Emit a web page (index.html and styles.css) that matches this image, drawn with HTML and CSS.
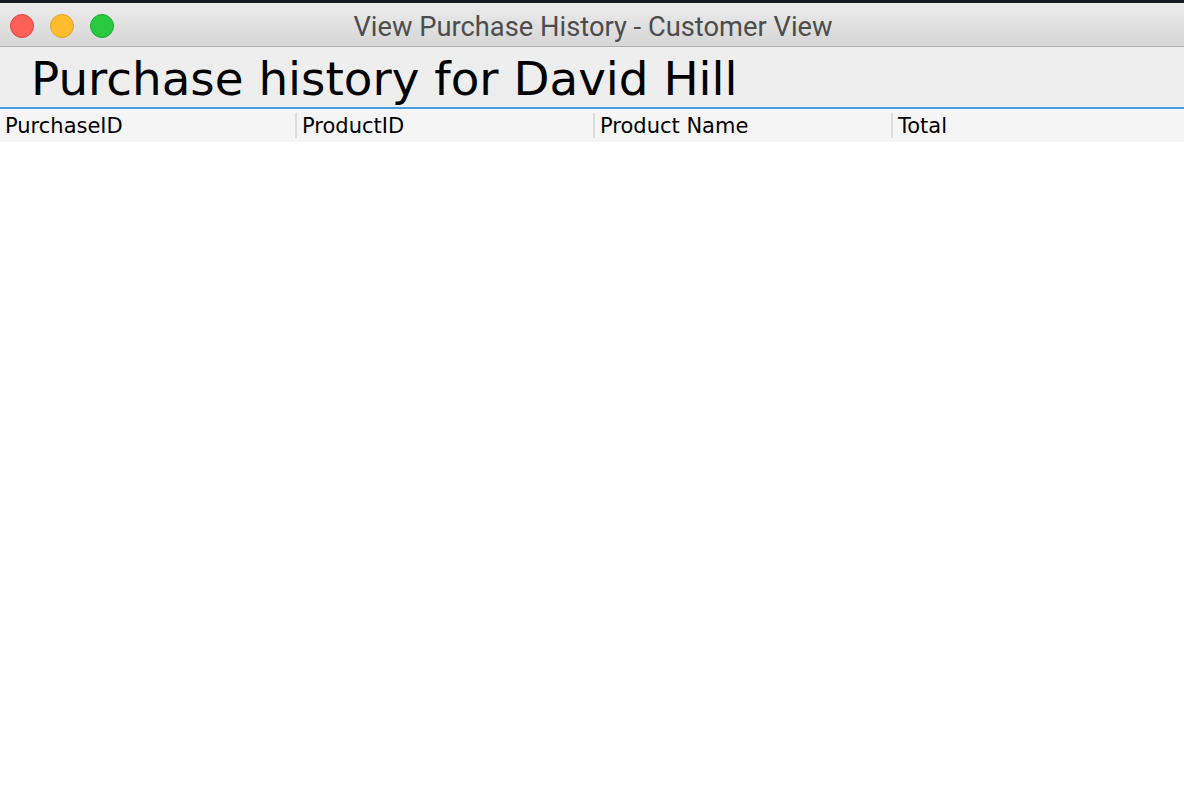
FILE: index.html
```html
<!DOCTYPE html>
<html>
<head>
<meta charset="utf-8">
<link rel="stylesheet" href="styles.css">
</head>
<body>
<div class="window">
  <div class="topstrip"></div>
  <div class="titlebar">
    <div class="lights">
      <span class="light red"></span>
      <span class="light yellow"></span>
      <span class="light green"></span>
    </div>
    <div class="title">View Purchase History - Customer View</div>
  </div>
  <div class="heading"><h1>Purchase history for David Hill</h1></div>
  <div class="table">
    <div class="thead">
      <div class="th first">PurchaseID</div>
      <div class="th">ProductID</div>
      <div class="th">Product Name</div>
      <div class="th">Total</div>
    </div>
    <div class="tbody"></div>
  </div>
</div>
</body>
</html>
```
FILE: styles.css
```css
html, body {
  margin: 0;
  padding: 0;
  background: #ffffff;
}
.window {
  width: 1184px;
  height: 798px;
  display: flex;
  flex-direction: column;
  overflow: hidden;
}
.topstrip {
  height: 3px;
  background: #161a22;
}
.titlebar {
  position: relative;
  height: 43px;
  background: linear-gradient(#ececec, #d6d6d6);
  border-bottom: 1px solid #b1b1b1;
  display: flex;
  align-items: center;
  justify-content: center;
}
.lights {
  position: absolute;
  left: 10px;
  top: 11px;
  display: flex;
  gap: 16px;
}
.light {
  width: 22px;
  height: 22px;
  border-radius: 50%;
  display: block;
}
.red { background: #fe5f57; border: 1px solid #e0443e; }
.yellow { background: #febc2e; border: 1px solid #dea123; }
.green { background: #28c840; border: 1px solid #1aab29; }
.title {
  font-family: Roboto, "Liberation Sans", sans-serif;
  font-size: 27.3px;
  color: #4d4d4d;
  margin-top: 4px;
  margin-left: 2px;
}
.heading {
  background: #eeeeee;
  border-bottom: 2px solid #4a9ee0;
  box-sizing: border-box;
  height: 62px;
  padding-top: 5px;
  display: flex;
  align-items: center;
}
.heading h1 {
  margin: 0 0 0 31px;
  font-family: "DejaVu Sans", Verdana, sans-serif;
  font-weight: normal;
  font-size: 46.8px;
  color: #000;
  line-height: 1;
}
.thead {
  display: grid;
  grid-template-columns: 295px 298px 298px 1fr;
  height: 33px;
  background: #f5f5f5;
  align-items: center;
}
.th {
  font-family: "DejaVu Sans", Verdana, sans-serif;
  font-size: 21px;
  color: #000;
  padding-left: 5px;
  border-left: 2px solid #dddddd;
  line-height: 23px;
  padding-top: 2px;
}
.th.first {
  border-left: none;
  padding-left: 5px;
}
.tbody {
  flex: 1;
  background: #fff;
}
```
